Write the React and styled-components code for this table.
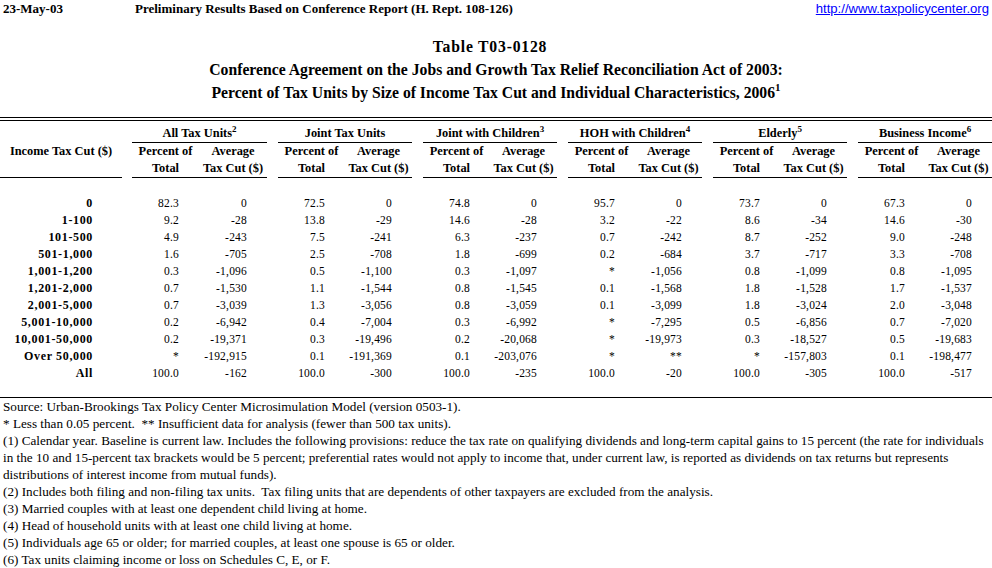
import React from 'react';
import styled, { createGlobalStyle } from 'styled-components';

const GlobalStyle = createGlobalStyle`
  body {
    margin: 0;
    background: #ffffff;
    color: #000000;
    font-family: "Liberation Serif", "Times New Roman", serif;
  }
`;

// Page wrapper
const Page = styled.div`
  width: 992px;
`;

// Top line: date, report name, link
const TopBar = styled.div`
  display: grid;
  grid-template-columns: 132px 1fr auto;
  align-items: center;
  height: 17px;
  padding: 0 3px;
  font-size: 13px;
  font-weight: bold;
  line-height: 17px;
`;

const SiteLink = styled.a`
  font-family: "Liberation Sans", Arial, sans-serif;
  font-weight: normal;
  font-size: 13.1px;
  color: #0000ff;
  text-decoration: underline;
`;

// Title block
const TitleBlock = styled.div`
  margin-top: 18px;
  margin-bottom: 13px;
  text-align: center;
  font-size: 15.7px;
  font-weight: bold;
  line-height: 23px;
`;

const TitleLine = styled.div`
  white-space: nowrap;
  letter-spacing: ${(p) => p.$track || 0}px;
  padding-right: ${(p) => p.$shift || 0}px;
`;

const Sup = styled.sup`
  font-size: ${(p) => p.$size || 9}px;
  line-height: 0;
  vertical-align: ${(p) => p.$raise || 5}px;
`;

// Table
const DataTable = styled.table`
  width: 992px;
  table-layout: fixed;
  border-collapse: collapse;
  border-top: 4px double #000;
`;

const Col = styled.col`
  width: ${(p) => p.$w}px;
`;

const HeadCell = styled.th`
  padding: 0;
  height: ${(p) => p.$h || 17}px;
  font-size: 12.4px;
  font-weight: bold;
  line-height: 17px;
  text-align: center;
  vertical-align: bottom;
  white-space: nowrap;
  border-bottom: ${(p) => (p.$line ? '1px solid #000' : 'none')};
`;

const Spacer = styled.td`
  padding: 0;
`;

const BlankRow = styled.tr`
  height: ${(p) => p.$h || 17}px;
`;

const LabelCell = styled.th`
  padding: 0 29px 0 0;
  height: 17px;
  font-size: 12px;
  font-weight: bold;
  letter-spacing: 0.65px;
  line-height: 17px;
  text-align: right;
  white-space: nowrap;
`;

const NumCell = styled.td`
  padding: 0 20px 0 0;
  height: 17px;
  font-size: 11.5px;
  letter-spacing: 0.2px;
  line-height: 17px;
  text-align: right;
  white-space: nowrap;
`;

// Footnotes
const Notes = styled.div`
  border-top: 1px solid #000;
  padding: 0 3px;
  font-size: 13.2px;
  line-height: 17px;
`;

const NoteLine = styled.div`
  white-space: pre;
`;

const groups = [
  { name: 'All Tax Units', sup: '2', w: [67, 68] },
  { name: 'Joint Tax Units', w: [67, 67] },
  { name: 'Joint with Children', sup: '3', w: [67, 67] },
  { name: 'HOH with Children', sup: '4', w: [67, 67] },
  { name: 'Elderly', sup: '5', w: [67, 67] },
  { name: 'Business Income', sup: '6', w: [67, 67] },
];

const rows = [
  ['0', '82.3', '0', '72.5', '0', '74.8', '0', '95.7', '0', '73.7', '0', '67.3', '0'],
  ['1-100', '9.2', '-28', '13.8', '-29', '14.6', '-28', '3.2', '-22', '8.6', '-34', '14.6', '-30'],
  ['101-500', '4.9', '-243', '7.5', '-241', '6.3', '-237', '0.7', '-242', '8.7', '-252', '9.0', '-248'],
  ['501-1,000', '1.6', '-705', '2.5', '-708', '1.8', '-699', '0.2', '-684', '3.7', '-717', '3.3', '-708'],
  ['1,001-1,200', '0.3', '-1,096', '0.5', '-1,100', '0.3', '-1,097', '*', '-1,056', '0.8', '-1,099', '0.8', '-1,095'],
  ['1,201-2,000', '0.7', '-1,530', '1.1', '-1,544', '0.8', '-1,545', '0.1', '-1,568', '1.8', '-1,528', '1.7', '-1,537'],
  ['2,001-5,000', '0.7', '-3,039', '1.3', '-3,056', '0.8', '-3,059', '0.1', '-3,099', '1.8', '-3,024', '2.0', '-3,048'],
  ['5,001-10,000', '0.2', '-6,942', '0.4', '-7,004', '0.3', '-6,992', '*', '-7,295', '0.5', '-6,856', '0.7', '-7,020'],
  ['10,001-50,000', '0.2', '-19,371', '0.3', '-19,496', '0.2', '-20,068', '*', '-19,973', '0.3', '-18,527', '0.5', '-19,683'],
  ['Over 50,000', '*', '-192,915', '0.1', '-191,369', '0.1', '-203,076', '*', '**', '*', '-157,803', '0.1', '-198,477'],
  ['All', '100.0', '-162', '100.0', '-300', '100.0', '-235', '100.0', '-20', '100.0', '-305', '100.0', '-517'],
];

const notes = [
  'Source: Urban-Brookings Tax Policy Center Microsimulation Model (version 0503-1).',
  '* Less than 0.05 percent.  ** Insufficient data for analysis (fewer than 500 tax units).',
  '(1) Calendar year. Baseline is current law. Includes the following provisions: reduce the tax rate on qualifying dividends and long-term capital gains to 15 percent (the rate for individuals',
  'in the 10 and 15-percent tax brackets would be 5 percent; preferential rates would not apply to income that, under current law, is reported as dividends on tax returns but represents',
  'distributions of interest income from mutual funds).',
  '(2) Includes both filing and non-filing tax units.  Tax filing units that are dependents of other taxpayers are excluded from the analysis.',
  '(3) Married couples with at least one dependent child living at home.',
  '(4) Head of household units with at least one child living at home.',
  '(5) Individuals age 65 or older; for married couples, at least one spouse is 65 or older.',
  '(6) Tax units claiming income or loss on Schedules C, E, or F.',
];

// spacer widths before each group
const gapBefore = [10, 11, 11, 11, 11, 11];

const App = () => {
  return (
    <Page>
      <GlobalStyle />
      <TopBar>
        <span>23-May-03</span>
        <span>Preliminary Results Based on Conference Report (H. Rept. 108-126)</span>
        <SiteLink href="#">http://www.taxpolicycenter.org</SiteLink>
      </TopBar>

      <TitleBlock>
        <TitleLine $track={0.8} $shift={12}>Table T03-0128</TitleLine>
        <TitleLine>Conference Agreement on the Jobs and Growth Tax Relief Reconciliation Act of 2003:</TitleLine>
        <TitleLine>
          Percent of Tax Units by Size of Income Tax Cut and Individual Characteristics, 2006
          <Sup $size={11} $raise={7}>1</Sup>
        </TitleLine>
      </TitleBlock>

      <DataTable>
        <colgroup>
          <Col $w={122} />
          {groups.map((g, i) => (
            <React.Fragment key={g.name}>
              <Col $w={gapBefore[i]} />
              <Col $w={g.w[0]} />
              <Col $w={g.w[1]} />
            </React.Fragment>
          ))}
        </colgroup>
        <thead>
          <tr>
            <HeadCell $h={21} />
            {groups.map((g) => (
              <React.Fragment key={g.name}>
                <Spacer />
                <HeadCell colSpan={2} $h={21} $line>
                  {g.name}
                  {g.sup && <Sup>{g.sup}</Sup>}
                </HeadCell>
              </React.Fragment>
            ))}
          </tr>
          <tr>
            <HeadCell>Income Tax Cut ($)</HeadCell>
            {groups.map((g) => (
              <React.Fragment key={g.name}>
                <Spacer />
                <HeadCell>Percent of</HeadCell>
                <HeadCell>Average</HeadCell>
              </React.Fragment>
            ))}
          </tr>
          <tr>
            <HeadCell $line />
            {groups.map((g) => (
              <React.Fragment key={g.name}>
                <Spacer />
                <HeadCell $line>Total</HeadCell>
                <HeadCell $line>Tax Cut ($)</HeadCell>
              </React.Fragment>
            ))}
          </tr>
        </thead>
        <tbody>
          <BlankRow />
          {rows.map((r) => (
            <tr key={r[0]}>
              <LabelCell>{r[0]}</LabelCell>
              {groups.map((g, i) => (
                <React.Fragment key={g.name}>
                  <Spacer />
                  <NumCell>{r[1 + i * 2]}</NumCell>
                  <NumCell>{r[2 + i * 2]}</NumCell>
                </React.Fragment>
              ))}
            </tr>
          ))}
          <BlankRow $h={15} />
        </tbody>
      </DataTable>

      <Notes>
        {notes.map((n) => (
          <NoteLine key={n}>{n}</NoteLine>
        ))}
      </Notes>
    </Page>
  );
};

export default App;
